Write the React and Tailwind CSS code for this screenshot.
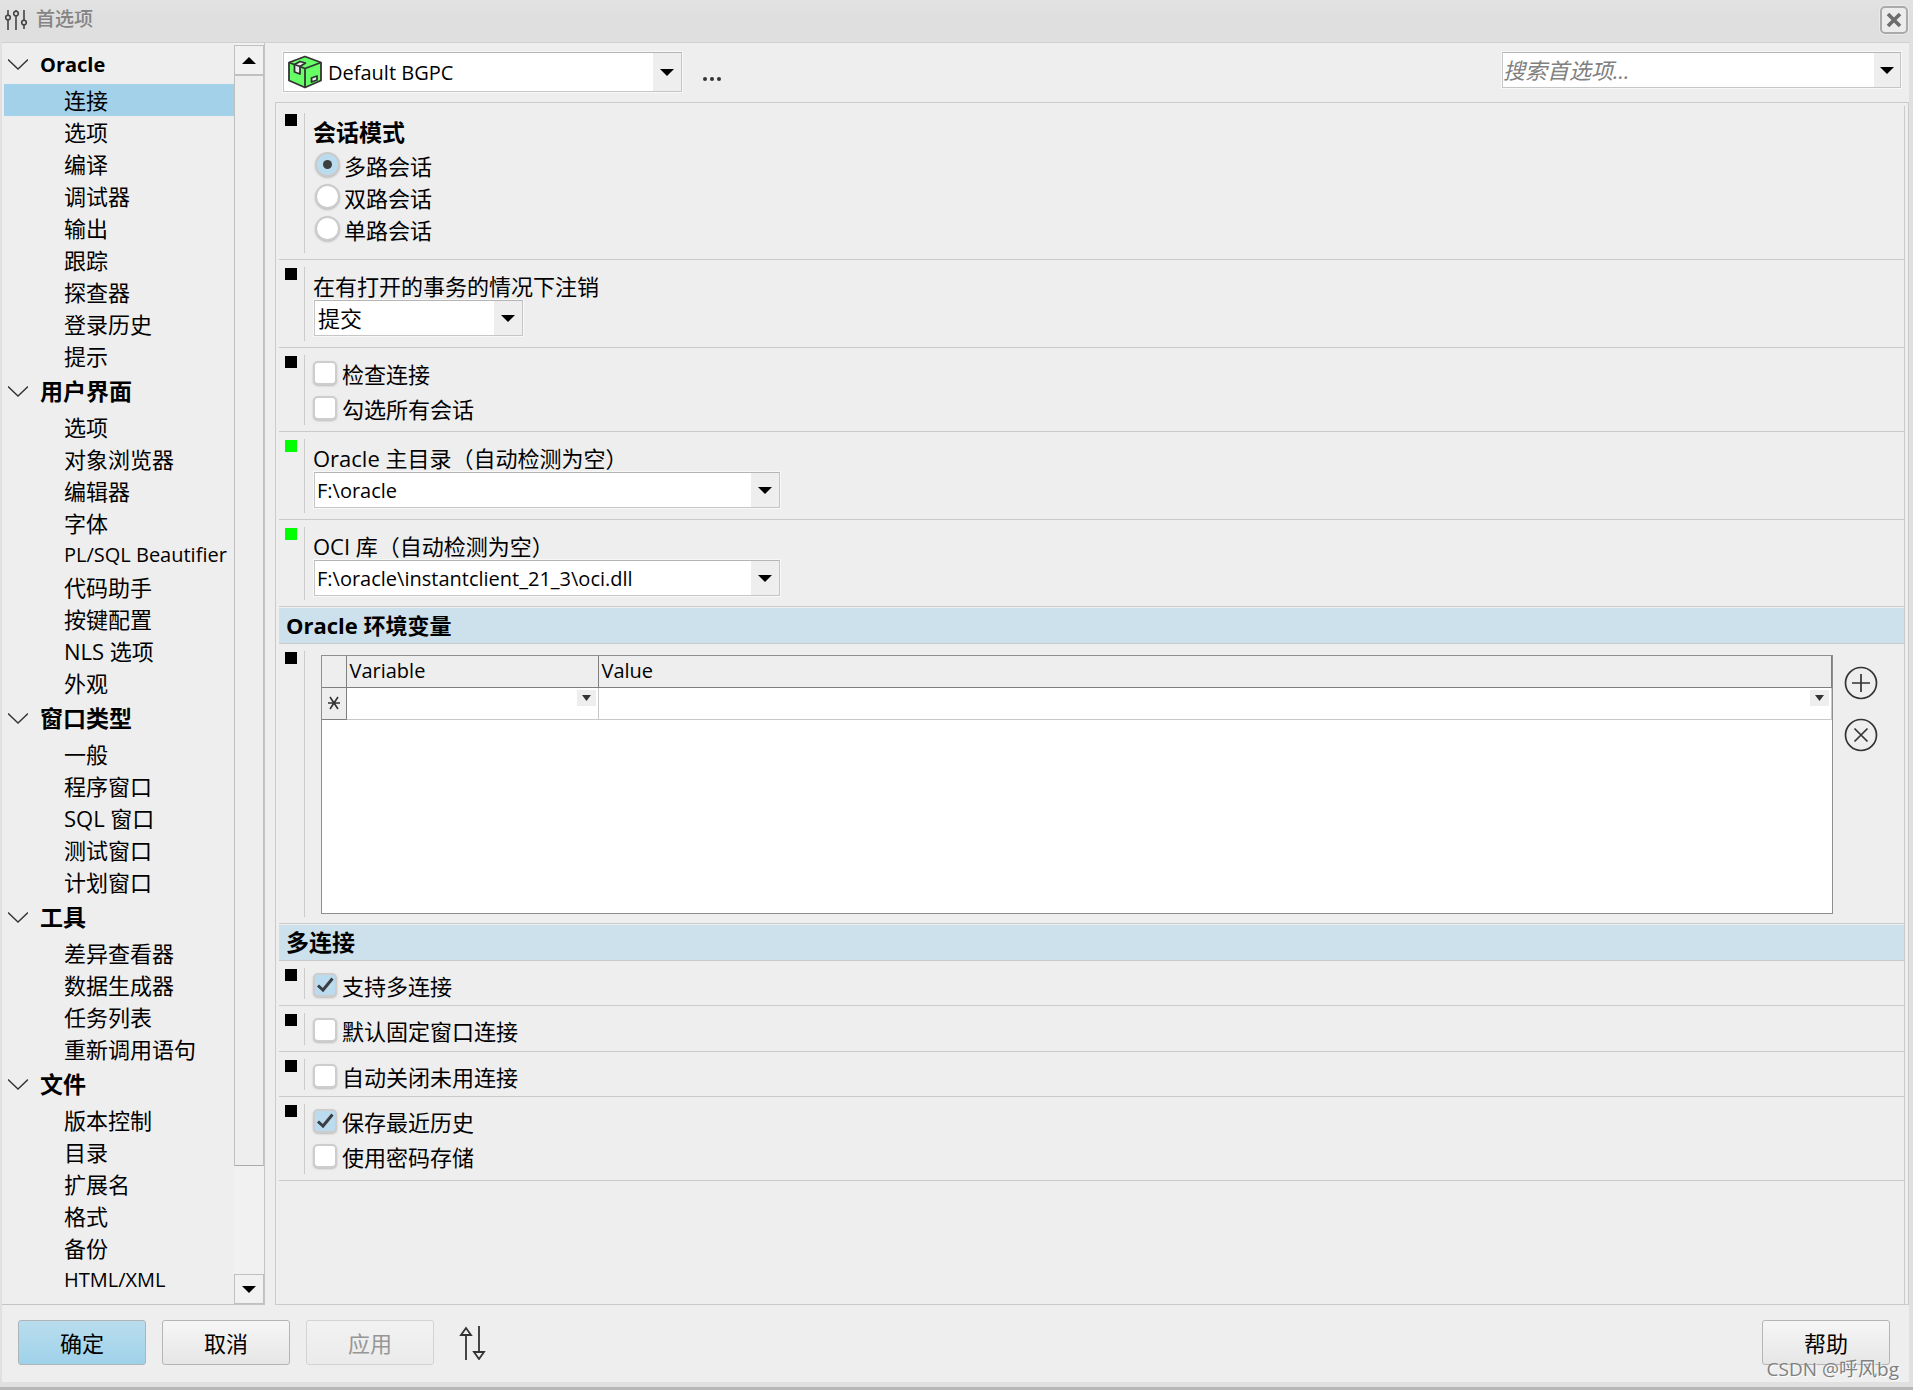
import { useState } from 'react'

const tree = [
  { title: 'Oracle', items: ['连接', '选项', '编译', '调试器', '输出', '跟踪', '探查器', '登录历史', '提示'] },
  {
    title: '用户界面',
    items: ['选项', '对象浏览器', '编辑器', '字体', 'PL/SQL Beautifier', '代码助手', '按键配置', 'NLS 选项', '外观'],
  },
  { title: '窗口类型', items: ['一般', '程序窗口', 'SQL 窗口', '测试窗口', '计划窗口'] },
  { title: '工具', items: ['差异查看器', '数据生成器', '任务列表', '重新调用语句'] },
  { title: '文件', items: ['版本控制', '目录', '扩展名', '格式', '备份', 'HTML/XML'] },
]

// Latin-only labels are set a little smaller than the Chinese ones
const isLatin = (text) => /^[\x20-\x7e]+$/.test(text)

function Triangle({ up, small }) {
  return (
    <svg className={small ? 'h-[6px] w-[9px]' : 'h-[7px] w-[14px]'} viewBox="0 0 14 7" preserveAspectRatio="none" aria-hidden="true">
      <path d={up ? 'M0 7L7 0L14 7Z' : 'M0 0L7 7L14 0Z'} fill={small ? '#333' : '#000'} />
    </svg>
  )
}

function Combo({ id, label, options, className, inputClass = 'pl-[3px]', icon }) {
  return (
    <div className={`relative flex items-center border border-[#c6c6c6] border-t-[#b5b5b5] bg-white shadow-[0_0_0_1px_#f8f8f8] ${className}`}>
      {icon}
      <select id={id} aria-label={label} className={`h-full w-full appearance-none bg-transparent outline-none ${inputClass}`}>
        {options.map((option) => (
          <option key={option}>{option}</option>
        ))}
      </select>
      <span className="pointer-events-none absolute inset-y-0 right-0 flex w-7 items-center justify-center bg-[#eee]">
        <Triangle />
      </span>
    </div>
  )
}

function Row({ green, children, className = '' }) {
  return (
    <div className="flex border-b border-[#cbcbcb] pt-[7px] pb-[6px] pl-[6px]">
      <div className={`mt-px size-3 shrink-0 ${green ? 'bg-[#00ff00]' : 'bg-black'}`} />
      <div className={`ml-[7px] min-w-0 flex-1 border-l border-[#cbcbcb] pl-2 ${className}`}>{children}</div>
    </div>
  )
}

function Check({ label, defaultChecked }) {
  return (
    <label className="flex h-[35px] items-center gap-[5px]">
      <span className="relative mb-1 flex size-6">
        <input
          type="checkbox"
          defaultChecked={defaultChecked}
          className="peer size-6 appearance-none rounded-[5px] border-2 border-[#cdcdcd] bg-white shadow-[0_1px_2px_#bbb] checked:bg-[#badcee]"
        />
        <svg className="pointer-events-none absolute inset-0 hidden size-6 peer-checked:block" viewBox="0 0 24 24" aria-hidden="true">
          <path d="M5 12.500L10 17L19.500 5.500" fill="none" stroke="#3c3f42" strokeWidth="3" />
        </svg>
      </span>
      {label}
    </label>
  )
}

function Radio({ label, checked, onChange }) {
  return (
    <label className="flex h-8 items-center gap-1">
      <span className="relative mb-1 ml-[2px] flex size-[25px]">
        <input
          type="radio"
          name="session-mode"
          checked={checked}
          onChange={onChange}
          className="peer size-[25px] appearance-none rounded-full border-2 border-[#cbcbcb] bg-white shadow-[0_1px_2px_#bbb] checked:bg-[#badcee]"
        />
        <span className="pointer-events-none absolute inset-2 hidden rounded-full bg-[#3c3f42] peer-checked:block" />
      </span>
      {label}
    </label>
  )
}

function SectionTitle({ children, className = '' }) {
  return (
    <h2 className={`mt-px h-9 border-b border-[#cbcbcb] bg-[#cde1ec] pl-[7px] leading-[34px] font-bold ${className}`}>{children}</h2>
  )
}

function PushButton({ children, disabled, primary, className = '' }) {
  const tone = primary
    ? 'border-[#adb5b9] bg-linear-to-b from-[#b9dded] to-[#9fd2ea]'
    : disabled
      ? 'border-[#d3d3d3] bg-linear-to-b from-[#f2f2f2] to-[#ebebeb] text-[#969696]'
      : 'border-[#b5b5b5] bg-linear-to-b from-[#f6f6f6] to-[#e6e6e6]'
  return (
    <button type="button" disabled={disabled} className={`h-[45px] w-32 rounded-[3px] border pt-px ${tone} ${className}`}>
      {children}
    </button>
  )
}

function TitleBar() {
  return (
    <header className="flex h-[42px] items-center bg-linear-to-b from-[#e2e2e2] via-[#dedede] to-[#e0e0e0] pr-[5px] pb-[3px] pl-1">
      <svg className="h-6 w-6" viewBox="0 0 24 24" fill="none" stroke="#444" strokeWidth="1.6" aria-hidden="true">
        <path d="M4 2V7M4 12V22M12 2V3M12 8V22M20 2V12M20 17V21" />
        <circle cx="4" cy="9.500" r="2.300" />
        <circle cx="12" cy="5.500" r="2.300" />
        <circle cx="20" cy="14.500" r="2.300" />
      </svg>
      <h1 className="ml-2 flex-1 text-[19px] font-medium text-[#848484]">首选项</h1>
      <button
        type="button"
        aria-label="关闭"
        className="flex size-7 items-center justify-center rounded-[5px] border-2 border-[#aaa] bg-[#ececec] shadow-[0_0_0_1px_#eaeaea]"
      >
        <svg className="size-4" viewBox="0 0 16 16" aria-hidden="true">
          <path d="M2 2L14 14M14 2L2 14" stroke="#6d6d6d" strokeWidth="3.600" />
        </svg>
      </button>
    </header>
  )
}

function Sidebar() {
  const [selected, setSelected] = useState('Oracle/连接')
  return (
    <aside className="flex w-[263px] shrink-0 border-r border-b border-[#c4c4c4]">
      <nav className="min-w-0 flex-1 pt-[2px] pl-[2px]">
        {tree.map((group) => (
          <section key={group.title}>
            <h2 className={`flex h-[39px] items-center pl-1 font-bold ${isLatin(group.title) ? 'text-xl' : 'text-[23px]'}`}>
              <svg className="mr-3 h-[11px] w-5" viewBox="0 0 20 11" aria-hidden="true">
                <path d="M0 0.500L10 10L20 0.500" fill="none" stroke="#333" strokeWidth="1.400" />
              </svg>
              {group.title}
            </h2>
            <ul>
              {group.items.map((item) => {
                const key = `${group.title}/${item}`
                return (
                  <li key={item}>
                    <button
                      type="button"
                      onClick={() => setSelected(key)}
                      className={`block h-8 w-full pl-[60px] text-left whitespace-nowrap ${isLatin(item) ? 'text-xl' : ''} ${selected === key ? 'bg-[#a2d1e9]' : ''}`}
                    >
                      {item}
                    </button>
                  </li>
                )
              })}
            </ul>
          </section>
        ))}
      </nav>
      <div className="flex w-[30px] flex-col bg-[#f1f1f1] pt-[2px]">
        <button type="button" aria-label="向上滚动" className="flex h-[30px] items-center justify-center border border-[#c0c0c0] bg-[#f1f1f1]">
          <Triangle up />
        </button>
        <div className="h-[1091px] border border-[#c0c0c0] border-b-[#aaa] bg-[#eee]" />
        <button type="button" aria-label="向下滚动" className="mt-auto flex h-[30px] items-center justify-center border border-[#c0c0c0] bg-[#f1f1f1]">
          <Triangle />
        </button>
      </div>
    </aside>
  )
}

function Cube() {
  return (
    <svg className="ml-1 size-[34px] shrink-0" viewBox="0 0 34 34" stroke="#333" strokeWidth="1.800" strokeLinejoin="round" aria-hidden="true">
      <path d="M17 1.500L33 7.500V25.500L17 32.500L1 25.500V7.500Z" fill="#66ff66" />
      <path d="M1 7.500L17 13.500L33 7.500M17 13.500V32.500" fill="none" />
      <path d="M6.500 9.500L12 6.500L17.500 8L12 11.500V19L6.500 17Z" fill="#eee" />
      <path d="M6.500 9.500L12 11.500" />
      <path d="M23.500 23L29 21V25L23.500 27Z" fill="#eee" />
    </svg>
  )
}

function CellArrow() {
  return (
    <span className="flex h-4 w-[19px] items-center justify-center bg-[#eee]">
      <Triangle small />
    </span>
  )
}

function Variables() {
  return (
    <div className="flex pt-1 pl-2">
      <div className="h-[259px] flex-1 border border-[#8f8f8f] bg-white">
        <table className="w-full table-fixed border-collapse text-left">
          <thead>
            <tr className="h-[31px] border-b border-[#808080] bg-[#eee]">
              <th className="w-6 border-r border-[#808080]" aria-label="行" />
              <th className="w-[252px] border-r border-[#808080] pl-[3px] text-xl leading-7 font-normal">Variable</th>
              <th className="border-r border-[#808080] pl-[3px] text-xl leading-7 font-normal">Value</th>
            </tr>
          </thead>
          <tbody>
            <tr className="h-8 border-b border-[#c8c8c8] align-top">
              <td className="border-r border-b border-[#808080] bg-[#eee] align-middle">
                <svg className="mx-auto size-[14px]" viewBox="0 0 14 14" stroke="#333" strokeWidth="1.600" aria-hidden="true">
                  <path d="M1 7H13M3 1L11 13M11 1L3 13" />
                </svg>
              </td>
              <td className="border-r border-[#c8c8c8]">
                <div className="flex justify-end pt-[2px] pr-[2px]">
                  <CellArrow />
                </div>
              </td>
              <td className="border-r border-[#c8c8c8]">
                <div className="flex justify-end pt-[2px] pr-[2px]">
                  <CellArrow />
                </div>
              </td>
            </tr>
          </tbody>
        </table>
      </div>
      <div className="flex w-[71px] flex-col gap-[18px] pt-[11px] pl-[11px]">
        <button type="button" aria-label="添加" className="size-[34px]">
          <svg viewBox="0 0 34 34" fill="none" stroke="#333" strokeWidth="1.700">
            <circle cx="17" cy="17" r="15.500" />
            <path d="M8 17H26M17 8V26" />
          </svg>
        </button>
        <button type="button" aria-label="删除" className="size-[34px]">
          <svg viewBox="0 0 34 34" fill="none" stroke="#333" strokeWidth="1.700">
            <circle cx="17" cy="17" r="15.500" />
            <path d="M10.500 10.500L23.500 23.500M23.500 10.500L10.500 23.500" />
          </svg>
        </button>
      </div>
    </div>
  )
}

function Toolbar() {
  return (
    <div className="flex items-start justify-between pt-[9px] pr-2 pl-2">
      <div className="flex items-start">
        <Combo label="首选项集" options={['Default BGPC']} className="h-10 w-[399px] text-xl" inputClass="pt-[2px] pl-[6px]" icon={<Cube />} />
        <button type="button" aria-label="更多" className="mt-[11px] ml-[19px] h-6 w-6">
          <svg viewBox="0 0 24 24" fill="#333">
            <circle cx="4" cy="16" r="2" />
            <circle cx="11" cy="16" r="2" />
            <circle cx="18" cy="16" r="2" />
          </svg>
        </button>
      </div>
      <div className="flex h-9 w-[399px] border border-[#c6c6c6] border-t-[#b5b5b5] bg-white shadow-[0_0_0_1px_#f8f8f8]">
        <input aria-label="搜索首选项" placeholder="搜索首选项..." className="min-w-0 flex-1 italic outline-none placeholder:text-[#808080]" />
        <button type="button" aria-label="展开" className="flex w-[26px] items-center justify-center bg-[#eee]">
          <Triangle />
        </button>
      </div>
    </div>
  )
}

function Settings() {
  const [mode, setMode] = useState('多路会话')
  return (
    <div className="mt-[10px] flex-1 border border-[#cbcbcb] pt-[3px] pr-[3px] pl-[3px]">
      <div className="h-full border-r border-[#cbcbcb]">
        <Row>
          <fieldset className="h-[140px] pt-px">
            <legend className="float-left h-9 w-full leading-9 text-[23px] font-bold">会话模式</legend>
            <div className="clear-both">
              {['多路会话', '双路会话', '单路会话'].map((item) => (
                <Radio key={item} label={item} checked={mode === item} onChange={() => setMode(item)} />
              ))}
            </div>
          </fieldset>
        </Row>
        <Row className="h-[74px]">
          <label htmlFor="logoff" className="mt-[5px] flex h-7 items-center">在有打开的事务的情况下注销</label>
          <Combo id="logoff" options={['提交', '回滚', '询问']} className="ml-px h-9 w-[209px]" />
        </Row>
        <Row className="h-[70px] pt-[2px]">
          <Check label="检查连接" />
          <Check label="勾选所有会话" />
        </Row>
        <Row green className="h-[74px]">
          <label htmlFor="home" className="mt-[5px] flex h-7 items-center">Oracle 主目录（自动检测为空）</label>
          <Combo id="home" options={['F:\\oracle']} className="ml-px h-9 w-[466px] text-xl" inputClass="pt-px pl-[2px]" />
        </Row>
        <Row green className="h-[73px]">
          <label htmlFor="oci" className="mt-[5px] flex h-7 items-center">OCI 库（自动检测为空）</label>
          <Combo
            id="oci"
            options={['F:\\oracle\\instantclient_21_3\\oci.dll']}
            className="ml-px h-9 w-[466px] text-xl"
            inputClass="pt-px pl-[2px]"
          />
        </Row>
        <SectionTitle>Oracle 环境变量</SectionTitle>
        <Row className="h-[266px]">
          <Variables />
        </Row>
        <SectionTitle className="text-[23px]">多连接</SectionTitle>
        <Row className="h-[31px] pt-px">
          <Check label="支持多连接" defaultChecked />
        </Row>
        <Row className="h-8 pt-px">
          <Check label="默认固定窗口连接" />
        </Row>
        <Row className="h-[31px] pt-px">
          <Check label="自动关闭未用连接" />
        </Row>
        <Row className="h-[70px] pt-px">
          <Check label="保存最近历史" defaultChecked />
          <Check label="使用密码存储" />
        </Row>
      </div>
    </div>
  )
}

function Footer() {
  return (
    <footer className="relative flex h-[77px] items-start gap-4 pt-[15px] pr-[19px] pl-4">
      <PushButton primary>确定</PushButton>
      <PushButton>取消</PushButton>
      <PushButton disabled>应用</PushButton>
      <button type="button" aria-label="导入导出" className="mt-[6px] ml-2 h-[34px] w-8">
        <svg viewBox="0 0 32 34" fill="none" stroke="#333" strokeWidth="1.800">
          <path d="M8 10V34M3 9L8 2L13 9ZM21 0V25M16 26L21 33L26 26Z" />
        </svg>
      </button>
      <PushButton className="ml-auto">帮助</PushButton>
      <span className="pointer-events-none absolute right-[10px] bottom-px text-[19px] leading-6 text-[#808080] [text-shadow:1px_1px_1px_#fff]">
        CSDN @呼风bg
      </span>
    </footer>
  )
}

export default function App() {
  return (
    <div className="flex min-h-screen flex-col border-b-[3px] border-[#b8b8b8] bg-[#e0e0e0] font-['Open_Sans','Noto_Sans_CJK_SC',sans-serif] text-[22px] text-black">
      <TitleBar />
      <div className="mr-1 mb-[5px] ml-[2px] flex flex-1 flex-col border-t border-[#d0d0d0] bg-[#eee]">
        <div className="flex flex-1">
          <Sidebar />
          <main className="ml-[10px] flex min-w-0 flex-1 flex-col">
            <Toolbar />
            <Settings />
          </main>
        </div>
        <Footer />
      </div>
    </div>
  )
}
